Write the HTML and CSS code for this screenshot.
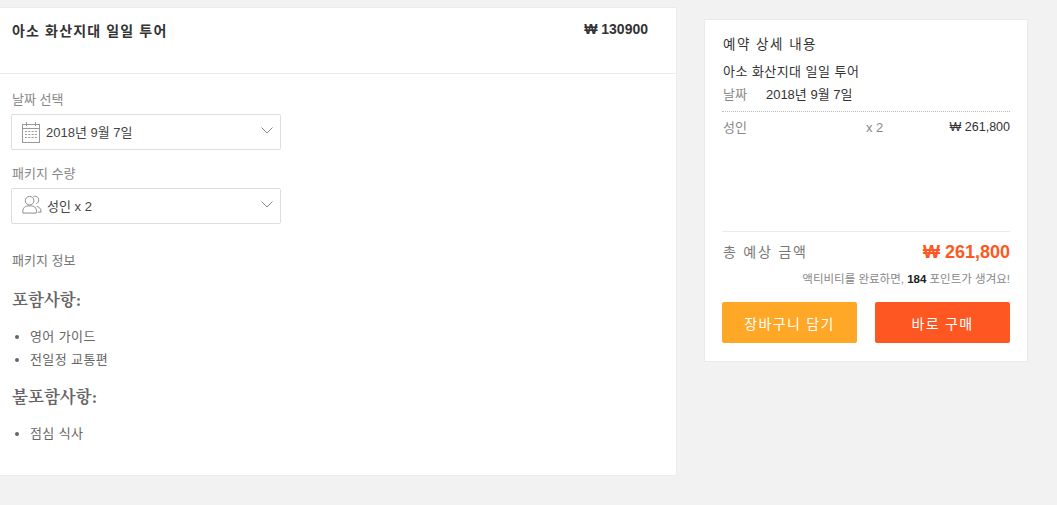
FILE: index.html
```html
<html>
<head>
<meta charset="utf-8">
<title>아소 화산지대 일일 투어</title>
<link rel="stylesheet" href="styles.css">
</head>
<body>
<div class="page">
  <div class="main-card">
    <div class="head">
      <h1 class="tour-name">아소 화산지대 일일 투어</h1>
      <div class="tour-price">₩ 130900</div>
    </div>
    <div class="body">
      <div class="label">날짜 선택</div>
      <div class="select">
        <svg class="ico-cal" width="18" height="21" viewBox="0 0 18 21" fill="none" stroke="#999" stroke-width="1">
          <rect x="0.5" y="2.5" width="17" height="18"/>
          <path d="M0.5 6.5H17.5M4.5 0V4M13.5 0V4"/>
          <path d="M3 9.5H15M3 12.5H15M3 15.5H15" stroke-dasharray="2 1.3"/>
        </svg>
        <span class="select-text">2018년 9월 7일</span>
        <svg class="chev" width="12" height="7" viewBox="0 0 12 7" fill="none" stroke="#888" stroke-width="1"><path d="M0.5 0.5L6 6L11.5 0.5"/></svg>
      </div>
      <div class="label second">패키지 수량</div>
      <div class="select">
        <svg class="ico-user" width="20" height="19" viewBox="0 0 21 19" fill="none" stroke="#888" stroke-width="1">
          <circle cx="8" cy="5.5" r="4.5"/>
          <path d="M12 1.2C15 0 17.5 2 17.5 4.7C17.5 6.5 16.5 8 15 8.8"/>
          <path d="M1 18.5C0 14 3 11 6 11H10C13.5 11 16 14 15 18.5Z"/>
          <path d="M15.5 11.5C18 12 20.5 14 20 17.5H16.5"/>
        </svg>
        <span class="select-text user-text">성인 x 2</span>
        <svg class="chev" width="12" height="7" viewBox="0 0 12 7" fill="none" stroke="#888" stroke-width="1"><path d="M0.5 0.5L6 6L11.5 0.5"/></svg>
      </div>
      <div class="label info">패키지 정보</div>
      <h3 class="sub">포함사항:</h3>
      <ul class="items">
        <li>영어 가이드</li>
        <li>전일정 교통편</li>
      </ul>
      <h3 class="sub">불포함사항:</h3>
      <ul class="items">
        <li>점심 식사</li>
      </ul>
    </div>
  </div>

  <div class="side-card">
    <div class="side-title">예약 상세 내용</div>
    <div class="side-name">아소 화산지대 일일 투어</div>
    <div class="side-date"><span class="muted">날짜</span><span>2018년 9월 7일</span></div>
    <div class="line-row">
      <span class="muted line-name">성인</span>
      <span class="muted line-qty">x 2</span>
      <span class="line-price">₩ 261,800</span>
    </div>
    <div class="total-row">
      <span class="total-label">총 예상 금액</span>
      <span class="total-price">₩ 261,800</span>
    </div>
    <div class="points">액티비티를 완료하면, <b>184</b> 포인트가 생겨요!</div>
    <div class="buttons">
      <button class="btn btn-cart">장바구니 담기</button>
      <button class="btn btn-buy">바로 구매</button>
    </div>
  </div>
</div>
</body>
</html>
```
FILE: styles.css
```css
html, body {
  margin: 0;
  height: 100%;
}

body {
  background: #f2f2f2;
  font-family: "Liberation Sans", "Noto Sans CJK KR", sans-serif;
  font-size: 13px;
  color: #333;
  overflow: hidden;
}

.page {
  display: flex;
  align-items: flex-start;
  padding-top: 7px;
}

.main-card {
  box-sizing: border-box;
  width: 677px;
  height: 469px;
  background: #fff;
  border: 1px solid #ebebeb;
  border-left: 0;
}

.head {
  box-sizing: border-box;
  height: 66px;
  display: flex;
  justify-content: space-between;
  padding: 14px 28px 0 12px;
  border-bottom: 1px solid #ebebeb;
}

.tour-name {
  margin: 0;
  font-size: 14px;
  letter-spacing: 1.15px;
  line-height: 18px;
  font-weight: bold;
  color: #333;
}

.tour-price {
  margin-top: -1px;
  font-size: 14px;
  line-height: 16px;
  font-weight: bold;
  color: #333;
}

.body {
  padding: 17px 0 0 12px;
}

.label {
  font-size: 13px;
  line-height: 17px;
  color: #888;
}

.label.second {
  margin-top: 15px;
}

.label.info {
  margin-top: 28px;
  color: #777;
}

.select {
  box-sizing: border-box;
  width: 270px;
  height: 36px;
  margin-top: 6px;
  margin-left: -1px;
  display: flex;
  align-items: center;
  background: #fff;
  border: 1px solid #ddd;
  border-radius: 2px;
  padding: 0 7px 0 10px;
}

.ico-user {
  margin-top: -3px;
}

.select-text {
  margin-left: 6px;
  margin-top: -2px;
  font-size: 13px;
  color: #444;
}

.user-text {
  margin-left: 5px;
}

.chev {
  margin-left: auto;
  margin-top: -4px;
}

.sub {
  margin: 21px 0 0;
  font-family: "Liberation Serif", "Noto Serif CJK KR", "Noto Sans CJK KR", serif;
  font-size: 16.5px;
  line-height: 22px;
  font-weight: bold;
  color: #666;
}

.items {
  margin: 13px 0 0;
  padding-left: 18px;
  color: #666;
  font-size: 13px;
  letter-spacing: 0.4px;
  line-height: 23px;
}

.items + .sub {
  margin-top: 16px;
}

.side-card {
  box-sizing: border-box;
  width: 324px;
  height: 343px;
  margin-top: 12px;
  margin-left: 27px;
  padding: 16px 17px 0 17px;
  background: #fff;
  border: 1px solid #ebebeb;
}

.side-title {
  padding-left: 1px;
  font-size: 13.5px;
  letter-spacing: 1.5px;
  line-height: 18px;
  color: #333;
}

.side-name {
  margin-top: 9px;
  padding-left: 1px;
  font-size: 13px;
  letter-spacing: 0.45px;
  line-height: 17px;
  color: #333;
}

.side-date {
  margin-top: 6px;
  padding-left: 1px;
  line-height: 17px;
  display: flex;
  gap: 19px;
  padding-bottom: 8px;
  border-bottom: 1px dotted #bbb;
}

.muted {
  color: #888;
}

.line-row {
  height: 112px;
  display: flex;
  padding-top: 7px;
  line-height: 17px;
  border-bottom: 1px solid #ebebeb;
}

.line-name {
  width: 144px;
  padding-left: 1px;
  box-sizing: border-box;
}

.line-price {
  margin-left: auto;
  font-size: 12.5px;
}

.total-row {
  display: flex;
  justify-content: space-between;
  align-items: center;
  margin-top: 10px;
  height: 20px;
}

.total-label {
  padding: 0 0 3px 1px;
  font-size: 14px;
  letter-spacing: 1.8px;
  color: #777;
}

.total-price {
  font-size: 18px;
  font-weight: bold;
  color: #ff5722;
}

.points {
  margin-top: 9px;
  text-align: right;
  font-size: 11.5px;
  line-height: 16px;
  color: #888;
}

.points b {
  color: #222;
}

.buttons {
  display: flex;
  justify-content: space-between;
  margin-top: 15px;
}

.btn {
  width: 135px;
  height: 41px;
  padding: 0;
  border: 0;
  border-radius: 2px;
  font-family: inherit;
  font-size: 14px;
  letter-spacing: 1.3px;
  color: #fff;
}

.btn-cart {
  background: #ffa726;
}

.btn-buy {
  background: #ff5722;
}
```
